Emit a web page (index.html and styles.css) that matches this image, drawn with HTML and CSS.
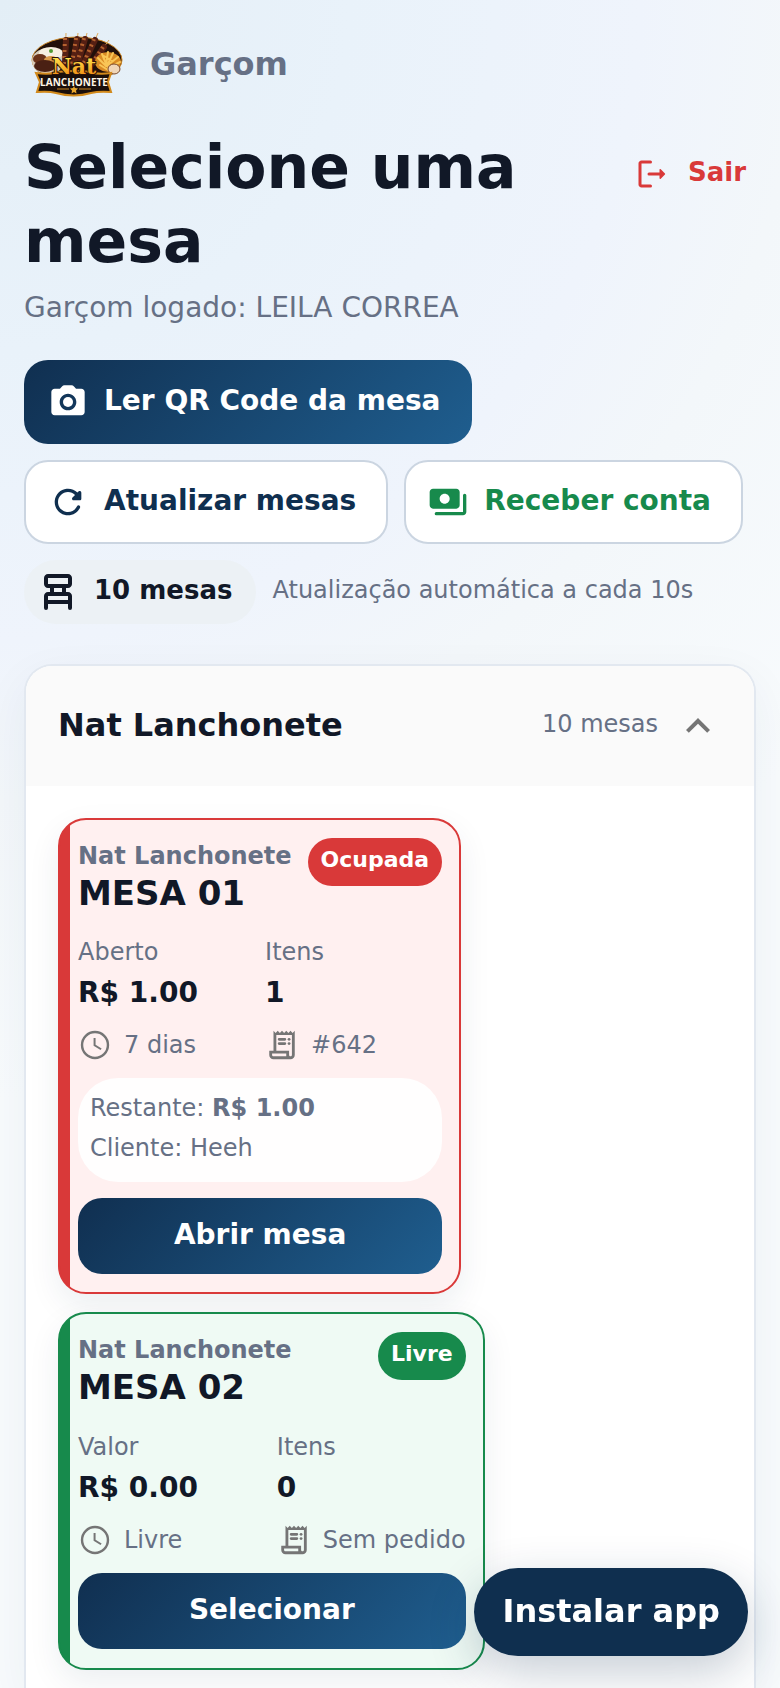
FILE: index.html
```
<!DOCTYPE html>
<html lang="pt-BR">
<head>
  <meta charset="UTF-8" />
  <title>Garçom – Selecione uma mesa</title>
  <meta name="viewport" content="width=device-width, initial-scale=1.0" />
  <link rel="stylesheet" href="styles.css">
</head>
<body>

  <!-- shared icons -->
  <svg class="sprite" aria-hidden="true">
    <symbol id="icon-clock" viewBox="0 0 24 24">
      <path d="M12 2a10 10 0 1 0 0 20 10 10 0 0 0 0-20zm0 18.300a8.300 8.300 0 1 1 0-16.600 8.300 8.300 0 0 1 0 16.600z" />
      <path d="M12.400 7h-1.400v5.600l4.900 3 .8-1.200-4.300-2.500z" />
    </symbol>
    <symbol id="icon-receipt" viewBox="0 0 24 24">
      <path d="M19.500 3.500 18 2l-1.500 1.500L15 2l-1.500 1.500L12 2l-1.500 1.500L9 2 7.500 3.500 6 2v14H3v3c0 1.660 1.340 3 3 3h12c1.660 0 3-1.340 3-3V2l-1.500 1.500zM15 20H6c-.55 0-1-.45-1-1v-1h10v2zm4-1c0 .55-.45 1-1 1s-1-.45-1-1v-3H8V5h11v14z" />
      <path d="M10 7h4a1 1 0 0 1 0 2h-4a1 1 0 0 1 0-2zM10 10h4a1 1 0 0 1 0 2h-4a1 1 0 0 1 0-2z" />
      <circle cx="17" cy="8" r="1" />
      <circle cx="17" cy="11" r="1" />
    </symbol>
  </svg>

  <main class="page">
    <div class="brand">
      <svg class="logo" viewBox="0 0 108 80" role="img" aria-label="Nat Lanchonete">
        <defs>
          <linearGradient id="gold" x1="0" y1="0" x2="0" y2="1">
            <stop offset="0.2" stop-color="#ffe04a" />
            <stop offset="0.9" stop-color="#f08a12" />
          </linearGradient>
        </defs>
        <ellipse cx="53" cy="36" rx="45" ry="23" fill="#22100a" stroke="#c98526" stroke-width="1" />
        <ellipse cx="24" cy="37" rx="16" ry="13" fill="#d9cdbb" />
        <ellipse cx="27" cy="29" rx="12" ry="6" fill="#f6efe0" />
        <ellipse cx="16" cy="35" rx="7" ry="5" fill="#6b3219" />
        <ellipse cx="27" cy="36" rx="7" ry="4" fill="#d99a4a" />
        <ellipse cx="21" cy="42" rx="11" ry="6" fill="#4a2013" />
        <circle cx="27" cy="27" r="2" fill="#4e9a31" />
        <g stroke="#e0ab5c" stroke-width="1">
          <path d="M42 9l-1 30M54 9l-4 30M63 9l-8 30M74 9L60 41M85 16L66 42" />
        </g>
        <g stroke="#551f13" stroke-width="6" stroke-linecap="round">
          <path d="M42 16l-1 23M53 15l-4 24M61 15l-7 24M71 16L60 39M80 23L68 40" />
        </g>
        <g stroke="#b5622f" stroke-width="4" stroke-dasharray="2 4">
          <path d="M41 14l-1 26M52 14l-4 26M60 14l-7 26M70 15L59 41M79 23L67 41" />
        </g>
        <ellipse cx="84" cy="38" rx="13" ry="10" fill="#d98a24" />
        <g stroke="#f9c657" stroke-width="2" stroke-linecap="round">
          <path d="M74 34l8 8M78 30l5 12M84 28l-2 13M89 29l-6 13M94 33l-10 8M76 41l8 5M96 38l-12 6M80 32l9 5" />
        </g>
        <ellipse cx="90" cy="45" rx="6" ry="5" fill="#f0d6b8" stroke="#7c4b2c" stroke-width="1" />
        <path d="M12 49q14 2 21-1 17-2 34 0 7 3 20 1l-3 9 3 10q-12-1-20 1-17 5-35 0-7-2-19-1l3-10z" fill="#1a0f0b" stroke="#d28a1c" stroke-width="2" />
        <text class="logo-name" x="50" y="50" text-anchor="middle">Nat</text>
        <text class="logo-sub" x="50" y="62" text-anchor="middle">LANCHONETE</text>
        <path d="M33 65h12M55 65h12" stroke="#c9851f" stroke-width="1" />
        <path d="M50 62l1 2 3 .5-2 2 .5 3-2.500-1.500-2.500 1.500.5-3-2-2 3-.5z" fill="#e8a62c" />
      </svg>
      <span class="brand-role">Garçom</span>
    </div>

    <header class="top">
      <div>
        <h1>Selecione uma mesa</h1>
        <p class="user">Garçom logado: LEILA CORREA</p>
      </div>
      <button type="button" class="logout">
        <svg class="icon-exit" viewBox="0 0 24 24"><path d="M5 5h6a1 1 0 0 0 0-2H5c-1.100 0-2 .9-2 2v14c0 1.100.9 2 2 2h6a1 1 0 0 0 0-2H5V5zm15.650 6.650l-2.790-2.790a.5.5 0 0 0-.86.350V11h-7a1 1 0 0 0 0 2h7v1.790c0 .450.540.670.850.350l2.790-2.790c.2-.19.2-.51.010-.7z" /></svg>
        <span>Sair</span>
      </button>
    </header>

    <div class="actions">
      <button type="button" class="btn btn-primary">
        <svg class="icon" viewBox="0 0 24 24"><circle cx="12" cy="12" r="3" /><path d="M20 4h-3.170l-1.240-1.350A1.990 1.990 0 0 0 14.120 2H9.880c-.56 0-1.100.24-1.480.650L7.170 4H4c-1.100 0-2 .9-2 2v12c0 1.100.9 2 2 2h16c1.100 0 2-.9 2-2V6c0-1.100-.9-2-2-2zm-8 13c-2.760 0-5-2.240-5-5s2.240-5 5-5 5 2.240 5 5-2.240 5-5 5z" /></svg>
        <span>Ler QR Code da mesa</span>
      </button>
      <button type="button" class="btn btn-outline">
        <svg class="icon" viewBox="0 0 24 24"><path d="M17.650 6.350c-1.630-1.630-3.940-2.570-6.480-2.310-3.670.370-6.690 3.350-7.100 7.020C3.520 15.910 7.270 20 12 20c3.190 0 5.930-1.870 7.210-4.560.320-.67-.16-1.440-.9-1.440-.37 0-.72.200-.88.530-1.130 2.430-3.840 3.970-6.800 3.310-2.220-.49-4.010-2.300-4.480-4.520C5.310 9.440 8.260 6 12 6c1.660 0 3.140.690 4.220 1.780l-1.510 1.510c-.63.630-.19 1.710.700 1.710H19c.55 0 1-.45 1-1V6.410c0-.89-1.080-1.340-1.710-.71l-.64.650z" /></svg>
        <span>Atualizar mesas</span>
      </button>
      <button type="button" class="btn btn-outline btn-green">
        <svg class="icon" viewBox="0 0 24 24"><path d="M19 14V6c0-1.100-.9-2-2-2H3c-1.100 0-2 .9-2 2v8c0 1.100.9 2 2 2h14c1.100 0 2-.9 2-2zm-9-1c-1.660 0-3-1.340-3-3s1.340-3 3-3 3 1.340 3 3-1.340 3-3 3zm13-5v10c0 1.100-.9 2-2 2H5a1 1 0 0 1 0-2h16V8a1 1 0 0 1 2 0z" /></svg>
        <span>Receber conta</span>
      </button>
    </div>

    <div class="status">
      <div class="chip">
        <svg class="icon-chair" viewBox="0 0 24 24"><path d="M17 10c1.100 0 2-.9 2-2V5c0-1.100-.9-2-2-2H7c-1.100 0-2 .9-2 2v3c0 1.100.9 2 2 2h1v2H7c-1.100 0-2 .9-2 2v6a1 1 0 0 0 2 0v-2h10v2a1 1 0 0 0 2 0v-6c0-1.100-.9-2-2-2h-1v-2h1zM7 8V5h10v3H7zm10 8H7v-2h10v2zm-3-4h-4v-2h4v2z" /></svg>
        <span>10 mesas</span>
      </div>
      <span class="hint">Atualização automática a cada 10s</span>
    </div>

    <section class="panel">
      <header class="panel-head">
        <h2>Nat Lanchonete</h2>
        <span class="panel-count">10 mesas</span>
        <button type="button" class="toggle" aria-label="Recolher" aria-expanded="true">
          <svg class="icon-chevron" viewBox="0 0 24 24"><path d="M12 8l-6 6 1.410 1.410L12 10.830l4.590 4.580L18 14z" /></svg>
        </button>
      </header>

      <div class="tables">
        <article class="card card-busy">
          <div class="card-head">
            <div>
              <p class="card-place">Nat Lanchonete</p>
              <h3>MESA 01</h3>
            </div>
            <span class="badge">Ocupada</span>
          </div>
          <div class="info">
            <div><span class="label">Aberto</span><strong>R$ 1.00</strong></div>
            <div><span class="label">Itens</span><strong>1</strong></div>
            <div class="meta"><svg class="icon-small"><use href="#icon-clock" /></svg>7 dias</div>
            <div class="meta"><svg class="icon-small"><use href="#icon-receipt" /></svg>#642</div>
          </div>
          <div class="note">
            <p>Restante: <b>R$ 1.00</b></p>
            <p>Cliente: Heeh</p>
          </div>
          <button type="button" class="card-btn">Abrir mesa</button>
        </article>

        <article class="card card-free">
          <div class="card-head">
            <div>
              <p class="card-place">Nat Lanchonete</p>
              <h3>MESA 02</h3>
            </div>
            <span class="badge">Livre</span>
          </div>
          <div class="info">
            <div><span class="label">Valor</span><strong>R$ 0.00</strong></div>
            <div><span class="label">Itens</span><strong>0</strong></div>
            <div class="meta"><svg class="icon-small"><use href="#icon-clock" /></svg>Livre</div>
            <div class="meta"><svg class="icon-small"><use href="#icon-receipt" /></svg>Sem pedido</div>
          </div>
          <button type="button" class="card-btn">Selecionar</button>
        </article>
      </div>
    </section>
  </main>

  <button type="button" class="install">Instalar app</button>

</body>
</html>
```
FILE: styles.css
```
* {
  box-sizing: border-box;
}

body {
  margin: 0;
  font-family: "DejaVu Sans", Verdana, sans-serif;
  font-size: 24px;
  color: #111827;
  background: radial-gradient(circle at top left, #e3eef6 0, #e9f2fa 350px, #eff4fc 640px, #f3f7fa 800px, #f8fbfd 1100px);
}

h1,
h2,
h3,
p {
  margin: 0;
}

button {
  font-family: inherit;
  font-weight: bold;
  border: none;
  cursor: pointer;
}

svg {
  flex-shrink: 0;
  fill: currentColor;
}

.sprite {
  display: none;
}

.page {
  display: flex;
  flex-direction: column;
  min-height: 100vh;
  padding: 24px 24px 0;
}

/* top */
.brand {
  display: flex;
  align-items: center;
  gap: 18px;
  height: 80px;
}

.logo {
  width: 108px;
  height: 80px;
}

.logo-name {
  font-family: "DejaVu Serif", serif;
  font-size: 22px;
  font-weight: bold;
  fill: url(#gold);
  stroke: #2a1208;
  stroke-width: 2px;
  paint-order: stroke;
}

.logo-sub {
  font-family: "Open Sans", sans-serif;
  font-size: 10px;
  font-weight: bold;
  fill: #fff6e6;
}

.brand-role {
  font-size: 32px;
  font-weight: bold;
  color: #667085;
}

.top {
  display: flex;
  align-items: flex-start;
  justify-content: space-between;
  gap: 24px;
  margin-top: 26px;
}

h1 {
  font-size: 60px;
  line-height: 74px;
}

.user {
  margin-top: 10px;
  font-size: 28px;
  line-height: 40px;
  color: #667085;
}

.logout {
  display: flex;
  align-items: center;
  gap: 18px;
  margin-top: 20px;
  padding: 4px 10px;
  font-size: 26px;
  line-height: 36px;
  color: #d93939;
  background: none;
}

.icon-exit {
  width: 36px;
  height: 36px;
}

.actions {
  display: flex;
  flex-wrap: wrap;
  gap: 16px;
  margin-top: 32px;
}

.btn {
  display: flex;
  align-items: center;
  gap: 16px;
  height: 84px;
  padding: 0 32px 0 24px;
  font-size: 28px;
  border-radius: 24px;
}

.btn span,
.chip span,
.hint,
.logout span,
.panel-count {
  padding-bottom: 4px;
}

.btn-primary,
.card-btn {
  color: #fff;
  background: linear-gradient(135deg, #102f50, #1f5e8f);
}

.btn-outline {
  padding: 0 30px 0 22px;
  color: #0f2f4f;
  background: #fff;
  border: 2px solid #cbd5e1;
}

.btn-green {
  color: #178a4c;
}

.icon {
  width: 40px;
  height: 40px;
}

.status {
  display: flex;
  align-items: center;
  gap: 16px;
  margin-top: 16px;
}

.chip {
  display: flex;
  align-items: center;
  gap: 12px;
  height: 64px;
  padding: 0 24px 0 10px;
  font-size: 26px;
  font-weight: bold;
  background: #ecf1f5;
  border-radius: 32px;
}

.icon-chair,
.icon-chevron {
  width: 48px;
  height: 48px;
}

.hint {
  color: #667085;
}

/* panel */
.panel {
  flex: 1;
  margin-top: 40px;
  background: #fff;
  border: 2px solid #e2e8f0;
  border-bottom: none;
  border-radius: 28px 28px 0 0;
  box-shadow: 0 16px 48px rgba(15, 47, 79, 0.06);
}

.panel-head {
  display: flex;
  align-items: center;
  height: 120px;
  padding: 0 32px;
  background: #fafafa;
  border-radius: 26px 26px 0 0;
}

h2 {
  flex: 1;
  padding-bottom: 2px;
  font-size: 32px;
}

.panel-count {
  color: #667085;
}

.toggle {
  display: flex;
  margin-left: 16px;
  padding: 0;
  color: #757575;
  background: none;
}

.tables {
  display: grid;
  justify-items: start;
  gap: 18px;
  padding: 32px 32px 18px;
}

/* cards */
.card {
  display: grid;
  gap: 16px;
  min-height: 358px;
  padding: 18px 17px 18px 18px;
  border: 2px solid;
  border-radius: 28px;
  box-shadow: 0 12px 32px rgba(15, 47, 79, 0.08);
}

.card-busy {
  border-color: #d93939;
  background: linear-gradient(90deg, #d93939 10px, #fff0f0 10px);
}

.card-free {
  border-color: #178a4c;
  background: linear-gradient(90deg, #178a4c 10px, #effaf4 10px);
}

.card-head {
  display: flex;
  align-items: flex-start;
  justify-content: space-between;
  gap: 16px;
}

.card-place {
  font-weight: bold;
  line-height: 36px;
  color: #667085;
}

h3 {
  font-size: 34px;
  line-height: 38px;
}

.badge {
  height: 48px;
  padding: 0 13px;
  font-size: 22px;
  font-weight: bold;
  line-height: 44px;
  color: #fff;
  border-radius: 24px;
}

.card-busy .badge {
  background: #d93939;
}

.card-free .badge {
  background: #178a4c;
}

.info {
  display: grid;
  grid-template-columns: 1fr 1fr;
  gap: 14px 10px;
  margin-top: 4px;
}

.info strong {
  display: block;
  font-size: 28px;
  line-height: 42px;
}

.label {
  display: block;
  line-height: 40px;
  color: #667085;
}

.meta {
  display: flex;
  align-items: center;
  gap: 12px;
  line-height: 34px;
  color: #667085;
}

.icon-small {
  width: 34px;
  height: 34px;
  color: #757575;
}

.note {
  padding: 10px 12px 14px;
  line-height: 40px;
  color: #667085;
  background: rgba(255, 255, 255, 0.9);
  border-radius: 40px;
}

.card-btn {
  height: 76px;
  padding: 0 0 4px;
  font-size: 28px;
  border-radius: 24px;
}

.install {
  position: fixed;
  right: 32px;
  bottom: 32px;
  height: 88px;
  padding: 0 28px 2px;
  font-size: 32px;
  color: #fff;
  background: #0f2f4f;
  border-radius: 44px;
  box-shadow: 0 16px 48px rgba(15, 47, 79, 0.24);
}
```
